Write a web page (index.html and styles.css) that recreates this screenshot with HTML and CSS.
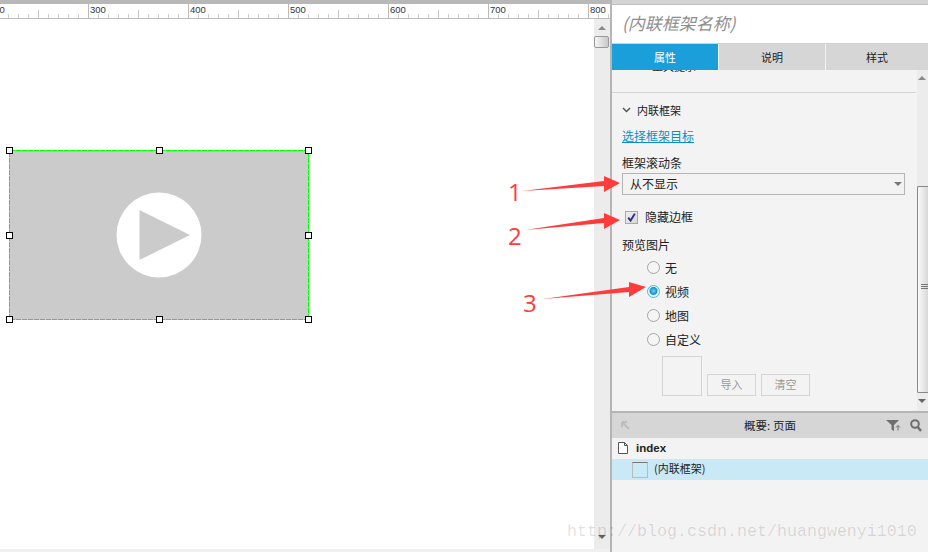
FILE: index.html
```html
<!DOCTYPE html>
<html lang="zh-CN">
<head>
    <meta charset="UTF-8">
    <title>内联框架</title>
    <link rel="stylesheet" href="styles.css">
</head>
<body>
    <div class="app">
        <!-- Canvas side -->
        <div class="stage">
            <div class="stage-top"></div>
            <div class="ruler">
                <span class="ruler-num ruler-num-0">200</span>
                <span class="ruler-num ruler-num-1">300</span>
                <span class="ruler-num ruler-num-2">400</span>
                <span class="ruler-num ruler-num-3">500</span>
                <span class="ruler-num ruler-num-4">600</span>
                <span class="ruler-num ruler-num-5">700</span>
                <span class="ruler-num ruler-num-6">800</span>
            </div>
            <div class="stage-body">
                <div class="canvas">
                    <div class="widget">
                        <svg class="play" width="86" height="86" viewBox="0 0 86 86">
                            <circle cx="43" cy="43" r="42.5" fill="#fff"/>
                            <path d="M23.5 18 L74 43 L23.5 68 Z" fill="#cbcbcb"/>
                        </svg>
                        <svg class="widget-outline" width="300" height="170" viewBox="0 0 300 170">
                            <rect x="0.5" y="0.5" width="299" height="169" fill="none" stroke="#00ff00" stroke-dasharray="5 1" shape-rendering="crispEdges"/>
                        </svg>
                        <i class="handle handle-tl"></i>
                        <i class="handle handle-tc"></i>
                        <i class="handle handle-tr"></i>
                        <i class="handle handle-ml"></i>
                        <i class="handle handle-mr"></i>
                        <i class="handle handle-bl"></i>
                        <i class="handle handle-bc"></i>
                        <i class="handle handle-br"></i>
                    </div>
                </div>
                <div class="stage-scroll">
                    <i class="arrow-up"></i>
                    <div class="stage-thumb"></div>
                    <i class="arrow-down"></i>
                </div>
            </div>
            <div class="stage-bottom"></div>
        </div>

        <!-- Inspector side -->
        <div class="side">
            <div class="side-top"></div>
            <div class="name-box">(内联框架名称)</div>
            <div class="tabs">
                <div class="tab tab-active">属性</div>
                <div class="tab">说明</div>
                <div class="tab">样式</div>
            </div>

            <div class="props">
                <div class="props-content">
                    <div class="clipped-row"><span>工具提示</span></div>
                    <div class="section-head">
                        <svg width="9" height="6" viewBox="0 0 9 6"><path d="M1 1 L4.5 4.5 L8 1" fill="none" stroke="#555" stroke-width="1.5"/></svg>
                        <span>内联框架</span>
                    </div>
                    <a class="link">选择框架目标</a>
                    <div class="field-label label-scroll">框架滚动条</div>
                    <div class="select">
                        <span>从不显示</span>
                        <i class="select-caret"></i>
                    </div>
                    <div class="check-row">
                        <span class="checkbox">
                            <svg width="9" height="9" viewBox="0 0 9 9"><path d="M1.2 4.6 L3.6 7.6 L7.8 0.8" fill="none" stroke="#2f2f80" stroke-width="1.9"/></svg>
                        </span>
                        <span>隐藏边框</span>
                    </div>
                    <div class="field-label label-preview">预览图片</div>
                    <div class="radio-list">
                        <div class="radio-row"><span class="radio"></span>无</div>
                        <div class="radio-row"><span class="radio radio-on"></span>视频</div>
                        <div class="radio-row"><span class="radio"></span>地图</div>
                        <div class="radio-row"><span class="radio"></span>自定义</div>
                    </div>
                    <div class="preview-row">
                        <div class="preview-box"></div>
                        <div class="btn">导入</div>
                        <div class="btn">清空</div>
                    </div>
                </div>
                <div class="props-scroll">
                    <i class="arrow-up"></i>
                    <div class="props-thumb"><i class="grip"></i></div>
                    <i class="arrow-down"></i>
                </div>
            </div>

            <div class="outline-head">
                <svg class="icon-back" width="9" height="9" viewBox="0 0 9 9"><path d="M1 1 H6 M1 1 V6 M1 1 L8 8" fill="none" stroke="#bdbdbd" stroke-width="2"/></svg>
                <span class="outline-title">概要: 页面</span>
                <svg class="icon-filter" width="15" height="11" viewBox="0 0 15 11"><path d="M0 0 H13 L8 5 V11 L5.5 9.5 V5 Z" fill="#6f6f6f"/><path d="M12 10.5 V5.5 M10 7.5 L12 5.5 L14 7.5" fill="none" stroke="#6f6f6f"/></svg>
                <svg class="icon-search" width="12" height="13" viewBox="0 0 12 13"><circle cx="5" cy="5" r="3.8" fill="none" stroke="#6f6f6f" stroke-width="2"/><path d="M7.8 8 L11 12" stroke="#6f6f6f" stroke-width="2.4"/></svg>
            </div>
            <div class="tree">
                <div class="tree-row tree-page">
                    <svg width="10" height="12" viewBox="0 0 10 12"><path d="M0.5 0.5 H6.5 L9.5 3.5 V11.5 H0.5 Z M6.5 0.5 V3.5 H9.5" fill="#fff" stroke="#555"/></svg>
                    <span>index</span>
                </div>
                <div class="tree-row tree-selected">
                    <span class="tree-frame"></span>
                    <span>(内联框架)</span>
                </div>
            </div>
        </div>

        <!-- Red notes drawn on top of the screenshot -->
        <svg class="notes" width="928" height="552" viewBox="0 0 928 552">
            <path d="M522 191 L604 181 L604 176 L620 183 L604 192 L604 186 Z" fill="#ff3b3b"/>
            <path d="M525 230 L604 218 L604 213 L620 220 L604 229 L604 223 Z" fill="#ff3b3b"/>
            <path d="M543 299 L629 287 L629 282 L646 287 L629 297 L629 292 Z" fill="#ff3b3b"/>
        </svg>
        <span class="note note-1">1</span>
        <span class="note note-2">2</span>
        <span class="note note-3">3</span>
        <div class="watermark">http://blog.csdn.net/huangwenyi1010</div>
    </div>
</body>
</html>
```

FILE: styles.css
```css
body {
    margin: 0;
    font-family: "Noto Sans CJK SC", "Liberation Sans", sans-serif;
    font-size: 12px;
    color: #222;
    background-color: #fff;
}
i {
    display: block;
}
.app {
    position: relative;
    display: flex;
    width: 928px;
    height: 552px;
    overflow: hidden;
}

/* Canvas side */
.stage {
    display: flex;
    flex-direction: column;
    width: 610px;
    flex: none;
}
.stage-top {
    height: 4px;
    background-color: #b8b8b8;
}
.ruler {
    position: relative;
    height: 14px;
    border-bottom: 1px solid #bbb;
    background-color: #fff;
    background-image:
        linear-gradient(90deg, #bbb 1px, transparent 1px),
        linear-gradient(90deg, #c4c4c4 1px, transparent 1px),
        linear-gradient(90deg, #ccc 1px, transparent 1px);
    background-size: 100px 14px, 100px 8px, 10px 4px;
    background-position: 88px bottom, 38px bottom, 8px bottom;
    background-repeat: repeat-x;
    overflow: hidden;
}
.ruler-num {
    position: absolute;
    top: 0;
    font-family: "Liberation Sans", sans-serif;
    font-size: 9.5px;
    line-height: 11px;
    color: #333;
}
.ruler-num-0 { left: -11px; }
.ruler-num-1 { left: 90px; }
.ruler-num-2 { left: 190px; }
.ruler-num-3 { left: 290px; }
.ruler-num-4 { left: 390px; }
.ruler-num-5 { left: 490px; }
.ruler-num-6 { left: 590px; }
.stage-body {
    display: flex;
    flex: 1;
    min-height: 0;
}
.canvas {
    position: relative;
    flex: 1;
    background-color: #fff;
}
.widget {
    position: absolute;
    left: 9px;
    top: 131px;
    width: 300px;
    height: 170px;
    display: flex;
    align-items: center;
    justify-content: center;
    background-color: #cbcbcb;
}
.widget-outline {
    position: absolute;
    left: 0;
    top: 0;
}
.handle {
    position: absolute;
    box-sizing: border-box;
    width: 7px;
    height: 7px;
    border: 1px solid #000;
    background-color: #fff;
}
.handle-tl { left: -3px; top: -3px; }
.handle-tc { left: 147px; top: -3px; }
.handle-tr { right: -3px; top: -3px; }
.handle-ml { left: -3px; top: 82px; }
.handle-mr { right: -3px; top: 82px; }
.handle-bl { left: -3px; bottom: -3px; }
.handle-bc { left: 147px; bottom: -3px; }
.handle-br { right: -3px; bottom: -3px; }
.stage-scroll {
    position: relative;
    width: 16px;
    background-color: #ececec;
}
.arrow-up,
.arrow-down {
    position: absolute;
    width: 0;
    height: 0;
    border-left: 4px solid transparent;
    border-right: 4px solid transparent;
}
.arrow-up {
    border-bottom: 4px solid #8a8a8a;
}
.arrow-down {
    border-top: 4px solid #666;
}
.stage-scroll .arrow-up {
    left: 4px;
    top: 7px;
}
.stage-scroll .arrow-down {
    left: 4px;
    bottom: 10px;
}
.stage-thumb {
    position: absolute;
    box-sizing: border-box;
    left: 0;
    top: 17px;
    width: 15px;
    height: 12px;
    border: 1px solid #999;
    border-radius: 2px;
    background: linear-gradient(90deg, #f6f6f6, #c8c8c8);
}
.stage-bottom {
    height: 3px;
    background-color: #f0f0f0;
}

/* Inspector side */
.side {
    display: flex;
    flex-direction: column;
    flex: 1;
    border-left: 2px solid #b5b5b5;
    min-width: 0;
}
.side-top {
    height: 4px;
    background-color: #d4d4d4;
    border-bottom: 1px solid #c0c0c0;
}
.name-box {
    height: 38px;
    line-height: 36px;
    padding-left: 10px;
    background-color: #fff;
    font-size: 17px;
    font-style: italic;
    color: #8f8f8f;
    border-bottom: 1px solid #d0d0d0;
}
.tabs {
    display: flex;
    gap: 1px;
    height: 26px;
    background-color: #f3f3f3;
}
.tab {
    flex: 0 0 106px;
    font-size: 11px;
    line-height: 26px;
    text-align: center;
    background-color: #d6d6d6;
}
.tab:last-child {
    flex: 1;
}
.tab-active {
    background-color: #1a9fdb;
    color: #fff;
}
.props {
    display: flex;
    height: 341px;
    background-color: #f3f3f3;
}
.props-content {
    width: 304px;
    flex: none;
    overflow: hidden;
}
.clipped-row {
    box-sizing: border-box;
    height: 23px;
    padding-left: 40px;
    border-bottom: 1px solid #d4d4d4;
    font-size: 11px;
    line-height: 12px;
    overflow: hidden;
}
.clipped-row span {
    display: block;
    margin-top: -10.5px;
}
.section-head {
    display: flex;
    align-items: center;
    gap: 6px;
    box-sizing: border-box;
    height: 34px;
    padding: 0 0 1px 10px;
    font-size: 11px;
}
.link {
    display: block;
    margin-left: 10px;
    font-size: 12px;
    line-height: 17px;
    height: 18px;
    color: #0a8fc5;
    text-decoration: underline;
}
.field-label {
    margin-left: 10px;
    line-height: 18px;
}
.label-scroll {
    margin-top: 9px;
}
.label-preview {
    margin-top: 11px;
}
.select {
    box-sizing: border-box;
    display: flex;
    align-items: center;
    justify-content: space-between;
    width: 283px;
    height: 22px;
    margin: 1px 0 0 10px;
    padding: 0 2px 2px 7px;
    border: 1px solid #b5b5b5;
}
.select-caret {
    width: 0;
    height: 0;
    margin-top: 2px;
    border-left: 4px solid transparent;
    border-right: 4px solid transparent;
    border-top: 4px solid #777;
}
.check-row {
    display: flex;
    align-items: center;
    gap: 7px;
    height: 16px;
    margin: 14px 0 0 13px;
}
.check-row span:last-child {
    margin-top: -1px;
}
.checkbox {
    box-sizing: border-box;
    display: flex;
    align-items: center;
    justify-content: center;
    width: 13px;
    height: 13px;
    border: 1px solid #aaa;
    background: linear-gradient(135deg, #eee, #d8d8d8);
}
.radio-list {
    margin: 2px 0 0 35px;
}
.radio-row {
    display: flex;
    align-items: center;
    gap: 5px;
    height: 24px;
    line-height: 22px;
}
.radio {
    box-sizing: border-box;
    width: 13px;
    height: 13px;
    margin-top: -1px;
    border: 1.5px solid #a5a5a5;
    border-radius: 50%;
    background-color: #f5f5f5;
}
.radio-on {
    border-color: #4fb4dc;
    background: radial-gradient(circle at 50% 45%, #6fd8f5 0, #0f8fc8 3.5px, #f0f8fb 4.5px);
}
.preview-row {
    display: flex;
    align-items: flex-end;
    gap: 5px;
    margin: 4px 0 0 50px;
}
.preview-box {
    box-sizing: border-box;
    width: 40px;
    height: 40px;
    border: 1px solid #d4d4d4;
}
.btn {
    box-sizing: border-box;
    width: 49px;
    height: 22px;
    line-height: 19px;
    text-align: center;
    border: 1px solid #d4d4d4;
    color: #999;
    font-size: 11px;
}
.props-scroll {
    position: relative;
    flex: 1;
    margin-left: 1px;
    background-color: #ececec;
}
.props-scroll .arrow-up {
    left: 1px;
    top: 6px;
}
.props-scroll .arrow-down {
    left: 1px;
    bottom: 8px;
}
.props-thumb {
    position: absolute;
    box-sizing: border-box;
    left: 0;
    top: 116px;
    width: 12px;
    height: 207px;
    border: 1px solid #888;
    border-right: 0;
    border-radius: 2px 0 0 2px;
    background: linear-gradient(90deg, #fafafa, #d4d4d4);
}
.grip {
    width: 7px;
    height: 5px;
    margin: 97px 0 0 3px;
    background: repeating-linear-gradient(180deg, #777 0 1px, transparent 1px 2px);
}
.outline-head {
    position: relative;
    display: flex;
    align-items: center;
    justify-content: center;
    height: 25px;
    border-top: 2px solid #b5b5b5;
    background-color: #d6d6d6;
    font-size: 11.5px;
    line-height: 22px;
}
.outline-title {
    margin-bottom: 2px;
}
.icon-back {
    position: absolute;
    left: 9px;
    top: 8px;
}
.icon-filter {
    position: absolute;
    right: 27px;
    top: 7px;
}
.icon-search {
    position: absolute;
    right: 6px;
    top: 6px;
}
.tree {
    flex: 1;
    background-color: #f3f3f3;
}
.tree-row {
    display: flex;
    align-items: center;
    height: 21px;
}
.tree-page {
    gap: 8px;
    box-sizing: border-box;
    padding: 0 0 1px 6px;
    font-family: "Liberation Sans", sans-serif;
    font-size: 11.5px;
    font-weight: bold;
}
.tree-selected {
    gap: 6px;
    padding-left: 20px;
    background-color: #c9e9f7;
    font-size: 11px;
    line-height: 18px;
}
.tree-selected span:last-child {
    margin-top: -3px;
}
.tree-frame {
    box-sizing: border-box;
    width: 16px;
    height: 16px;
    border: 1px solid #bbb;
    border-top-color: #777;
}

/* Red notes */
.notes {
    position: absolute;
    left: 0;
    top: 0;
}
.note {
    position: absolute;
    font-family: "Open Sans", sans-serif;
    font-size: 24px;
    line-height: 25px;
    color: #ff3b3b;
}
.note-1 { left: 508px; top: 179px; }
.note-2 { left: 508px; top: 223px; }
.note-3 { left: 523px; top: 290px; }
.watermark {
    position: absolute;
    left: 567px;
    top: 521px;
    font-family: "Liberation Mono", monospace;
    font-size: 16.67px;
    line-height: 22px;
    color: rgba(0, 0, 0, 0.13);
    white-space: nowrap;
}
```
